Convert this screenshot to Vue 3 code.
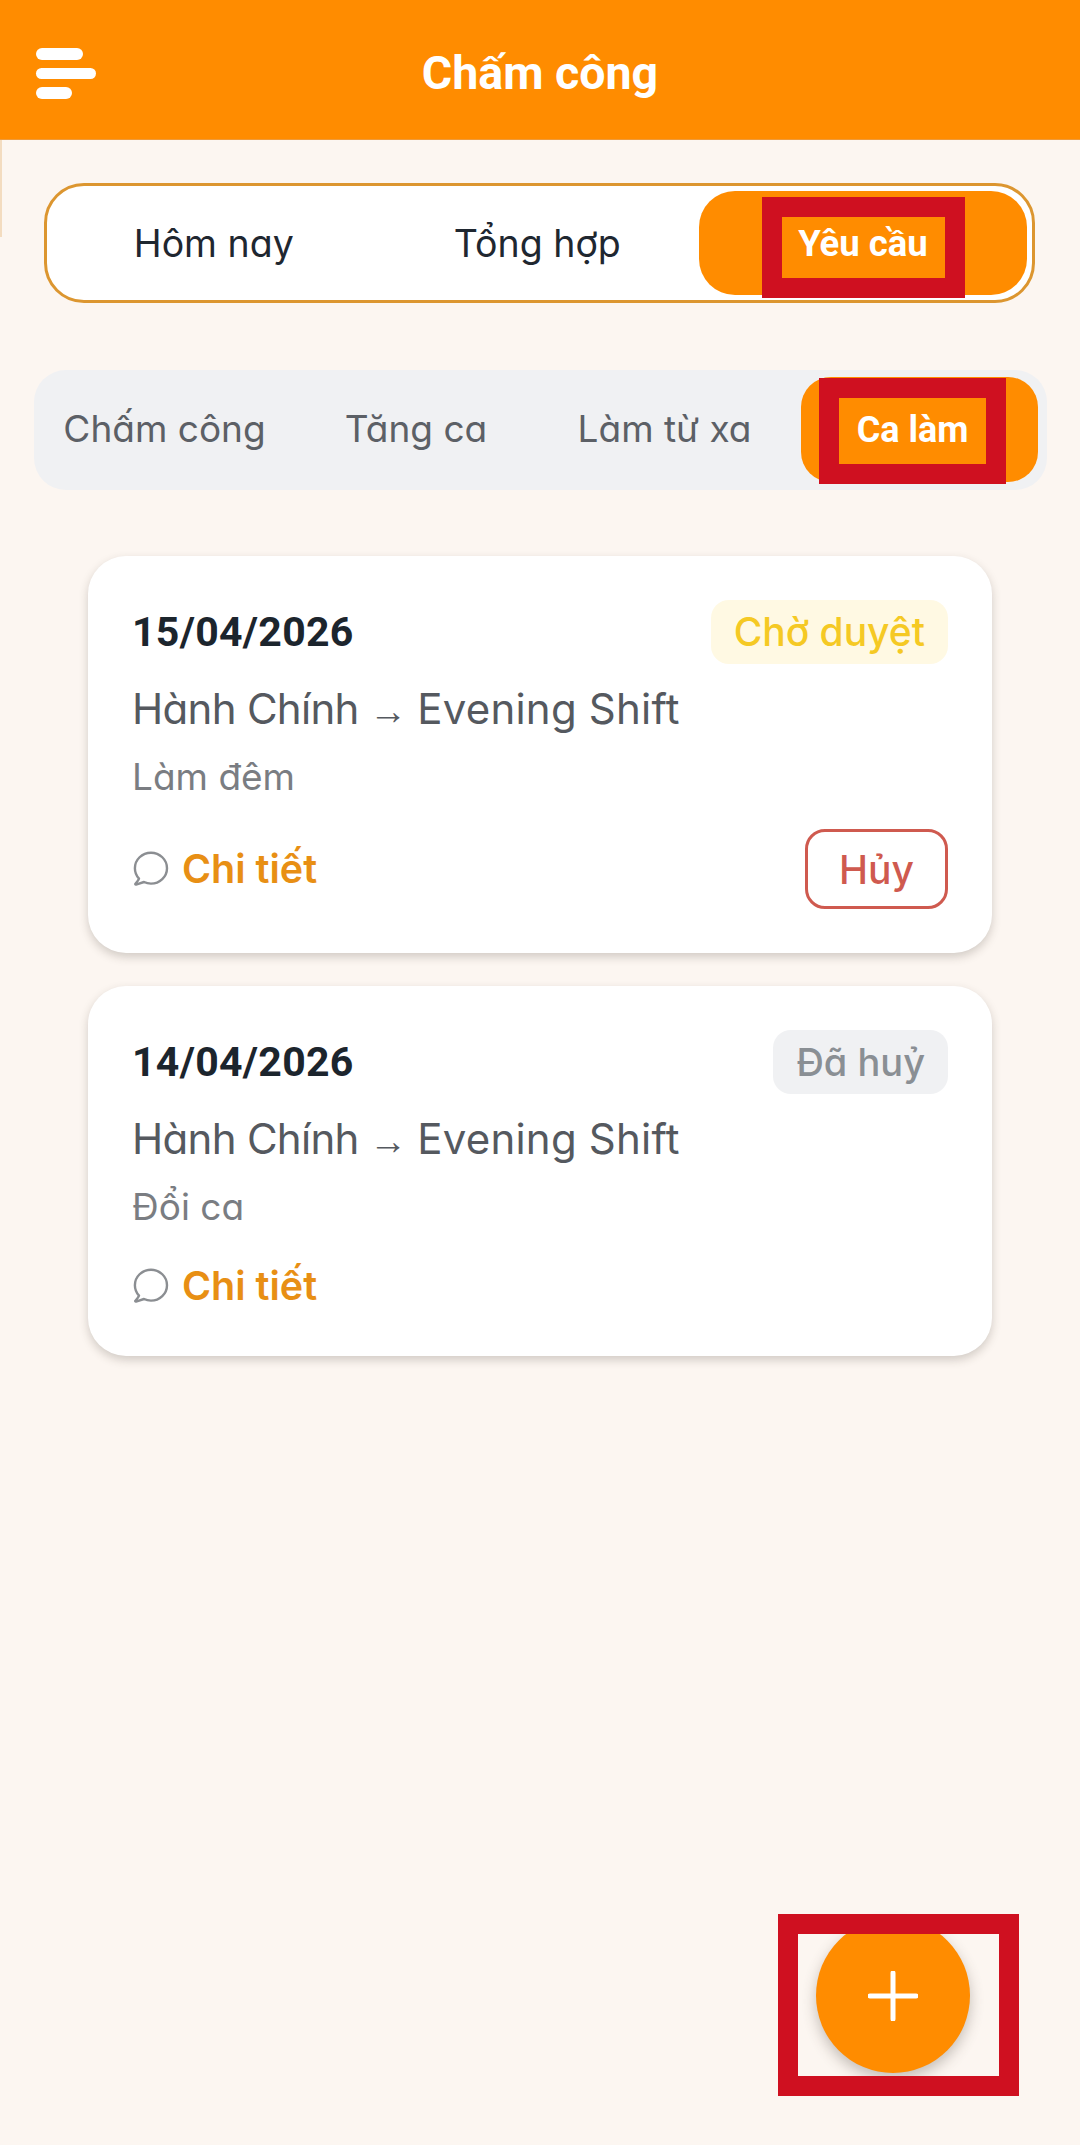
<script setup>
const mainTabs = [
  { label: 'Hôm nay' },
  { label: 'Tổng hợp' },
  { label: 'Yêu cầu', active: true },
]
const subTabs = [
  { label: 'Chấm công', cls: 'w1' },
  { label: 'Tăng ca', cls: 'w2' },
  { label: 'Làm từ xa', cls: 'w3' },
  { label: 'Ca làm', cls: 'w4', active: true },
]
const cards = [
  { date: '15/04/2026', status: 'Chờ duyệt', tone: 'pending', note: 'Làm đêm', cancel: true },
  { date: '14/04/2026', status: 'Đã huỷ', tone: 'cancelled', note: 'Đổi ca', cancel: false },
]
</script>

<template>
  <div class="page">
    <span class="edge"></span>
    <header class="bar">
      <button class="menu" aria-label="Menu">
        <i class="l1"></i><i class="l2"></i><i class="l3"></i>
      </button>
      <h1>Chấm công</h1>
    </header>

    <nav class="main-tabs">
      <div v-for="t in mainTabs" :key="t.label" class="main-tab" :class="{ on: t.active }">
        <span>{{ t.label }}</span>
        <em v-if="t.active" class="mark mark-a"></em>
      </div>
    </nav>

    <nav class="sub-tabs">
      <div v-for="t in subTabs" :key="t.label" class="sub-tab" :class="[t.cls, { on: t.active }]">
        <span>{{ t.label }}</span>
        <em v-if="t.active" class="mark mark-b"></em>
      </div>
    </nav>

    <section class="list">
      <article v-for="c in cards" :key="c.date" class="card">
        <div class="top">
          <strong class="date">{{ c.date }}</strong>
          <span class="badge" :class="c.tone">{{ c.status }}</span>
        </div>
        <p class="shift"><span class="from">Hành Chính</span> <span class="arrow">→</span> <span class="to">Evening Shift</span></p>
        <p class="note">{{ c.note }}</p>
        <div class="foot">
          <div class="detail">
            <svg width="36" height="36" viewBox="0 0 36 36" fill="none">
              <path d="M6 27.6C3.4 24.8 1.9 21.2 1.9 17.2C1.9 8.7 9 1.7 18 1.7C26.8 1.7 34 8.7 34 17.2C34 25.7 26.8 32.6 18 32.6C15.6 32.6 13.2 32.1 11 31L3 33.6C2.4 33.8 2 33.2 2.4 32.7C4 31 5.4 29.5 6 27.6Z" stroke="#8b8e92" stroke-width="2.4" stroke-linejoin="round"/>
            </svg>
            <span>Chi tiết</span>
          </div>
          <button v-if="c.cancel" class="cancel">Hủy</button>
        </div>
      </article>
    </section>

    <div class="fab-wrap">
      <button class="fab" aria-label="Thêm">
        <svg width="50" height="50" viewBox="0 0 50 50" fill="none">
          <path d="M25 2V48M2 25H48" stroke="#fff" stroke-width="5" stroke-linecap="round"/>
        </svg>
      </button>
      <em class="mark mark-c"></em>
    </div>
  </div>
</template>

<style>
html, body { margin: 0; background: #fcf6f1; }
</style>

<style scoped>
.page {
  position: relative;
  width: 1080px;
  height: 2145px;
  overflow: hidden;
  background: #fcf6f1;
  font-family: Inter, "Noto Sans", sans-serif;
  font-feature-settings: "cv11";
}
.edge {
  position: absolute;
  left: 0;
  top: 139px;
  width: 2px;
  height: 98px;
  background: #f3dcc0;
}
.bar {
  position: relative;
  height: 139px;
  background: #ff8c00;
  box-shadow: 0 1px 0 #ee9a3a;
  display: flex;
  align-items: center;
  justify-content: center;
}
.bar h1 {
  margin: 7px 0 0;
  color: #fff;
  font: 700 46.5px/1 Roboto, sans-serif;
}
.menu {
  position: absolute;
  left: 36px;
  top: 48px;
  padding: 0;
  border: 0;
  background: none;
  display: flex;
  flex-direction: column;
  gap: 8px;
}
.menu i {
  display: block;
  height: 11.5px;
  border-radius: 6px;
  background: #fff;
}
.l1 { width: 47px; }
.l2 { width: 60px; }
.l3 { width: 36px; }
.main-tabs {
  display: flex;
  box-sizing: border-box;
  margin: 44px 0 0 44px;
  width: 991px;
  height: 120px;
  padding: 5px;
  border: 3px solid #dc9630;
  border-radius: 40px;
  background: #fff;
}
.main-tab {
  position: relative;
  flex: 1;
  display: flex;
  align-items: center;
  justify-content: center;
  color: #1f2730;
  font-size: 37.5px;
  border-radius: 36px;
}
.main-tab.on {
  flex: none;
  width: 328px;
  background: #ff8c00;
  color: #fff;
  font: 700 36.5px Roboto, sans-serif;
}
.mark {
  position: absolute;
  box-sizing: border-box;
  border: 20px solid #cf1020;
  pointer-events: none;
}
.mark-a { left: 63px; top: 6px; width: 203px; height: 101px; }
.sub-tabs {
  display: flex;
  box-sizing: border-box;
  margin: 67px 0 0 34px;
  width: 1013px;
  height: 120px;
  padding: 7px 8px 8px 0;
  border-radius: 32px;
  background: #f0f1f3;
}
.sub-tab {
  position: relative;
  display: flex;
  align-items: center;
  justify-content: center;
  padding-bottom: 2px;
  color: #5c6066;
  font-size: 37px;
  border-radius: 30px;
}
.w1 { width: 261px; }
.w2 { width: 242px; }
.w3 { width: 255px; margin-right: 9px; }
.w4 { width: 237px; }
.sub-tab.on {
  box-sizing: border-box;
  padding: 0 14px 0 0;
  background: #ff8c00;
  color: #fff;
  font: 700 36px Roboto, sans-serif;
}
.mark-b { left: 18px; top: 1px; width: 187px; height: 106px; }
.list {
  display: flex;
  flex-direction: column;
  gap: 33px;
  margin: 66px 0 0 88px;
  width: 904px;
}
.card {
  box-sizing: border-box;
  padding: 44px;
  border-radius: 38px;
  background: #fff;
  box-shadow: 0 4px 10px rgba(60, 50, 40, 0.22);
}
.top {
  display: flex;
  align-items: center;
  justify-content: space-between;
}
.date {
  color: #1c252d;
  font: 700 41px/1 Roboto, sans-serif;
  letter-spacing: 0.3px;
}
.badge {
  box-sizing: border-box;
  height: 64px;
  padding: 0 23px;
  border-radius: 18px;
  font-weight: 500;
  line-height: 64px;
}
.pending { background: #fff9e3; color: #f5c924; font-size: 39px; }
.cancelled { background: #f0f1f3; color: #8a8f94; font-size: 38px; }
.shift {
  margin: 20px 0 0;
  color: #55595f;
  font-size: 42px;
  line-height: 50px;
}
.from { letter-spacing: -0.7px; }
.to { letter-spacing: 0.2px; }
.arrow { margin: 0 -1.5px; font-family: "Liberation Serif", serif; font-size: 38px; line-height: 1; }
.note {
  margin: 20px 0 0;
  color: #7a7d82;
  font-size: 37px;
  line-height: 46px;
}
.foot {
  display: flex;
  align-items: center;
  justify-content: space-between;
  margin-top: 29px;
}
.detail {
  display: flex;
  align-items: center;
  gap: 13px;
  height: 53px;
  margin-left: 1px;
  color: #e88f14;
  font-size: 39.5px;
  font-weight: 600;
}
.cancel {
  box-sizing: border-box;
  width: 143px;
  height: 80px;
  padding: 0;
  border: 3px solid #cf5a4f;
  border-radius: 20px;
  background: #fff;
  color: #cf5a4f;
  font: 500 39px Inter, sans-serif;
  font-feature-settings: "cv11";
}
.fab-wrap {
  position: absolute;
  left: 778px;
  top: 1914px;
  width: 241px;
  height: 182px;
}
.fab {
  position: absolute;
  left: 38px;
  top: 4px;
  display: flex;
  align-items: center;
  justify-content: center;
  width: 154px;
  height: 155px;
  padding: 0;
  border: 0;
  border-radius: 50%;
  background: #ff8c00;
  box-shadow: 0 6px 14px rgba(70, 60, 50, 0.3);
}
.mark-c { left: 0; top: 0; width: 241px; height: 182px; }
</style>
